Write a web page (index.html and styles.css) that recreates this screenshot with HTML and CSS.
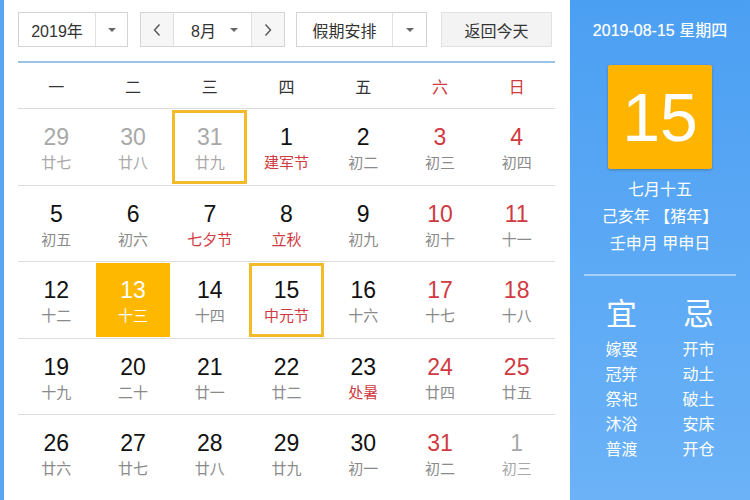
FILE: index.html
```html
<!DOCTYPE html>
<html lang="zh">
<head>
<meta charset="utf-8">
<link rel="stylesheet" href="styles.css">
</head>
<body>
<div class="app">
  <div class="edge"></div>
  <div class="cal">
    <div class="controls">
      <div class="sel sel-year">
        <span class="sel-text">2019年</span>
        <span class="sel-arrow"><i class="tri"></i></span>
      </div>
      <div class="sel sel-month">
        <span class="nav"><svg width="10" height="14" viewBox="0 0 10 14"><path d="M7.5 1.5 L2.5 7 L7.5 12.5" fill="none" stroke="#555" stroke-width="1.4"/></svg></span>
        <span class="month-mid"><span>8月</span><i class="tri"></i></span>
        <span class="nav"><svg width="10" height="14" viewBox="0 0 10 14"><path d="M2.5 1.5 L7.5 7 L2.5 12.5" fill="none" stroke="#555" stroke-width="1.4"/></svg></span>
      </div>
      <div class="sel sel-hol">
        <span class="sel-text">假期安排</span>
        <span class="sel-arrow"><i class="tri"></i></span>
      </div>
      <div class="btn-today">返回今天</div>
    </div>
    <div class="week">
      <span>一</span><span>二</span><span>三</span><span>四</span><span>五</span><span class="red">六</span><span class="red">日</span>
    </div>
    <div class="grid">
      <div class="cell other"><div class="in"><b>29</b><small>廿七</small></div></div>
      <div class="cell other"><div class="in"><b>30</b><small>廿八</small></div></div>
      <div class="cell other"><div class="in boxed"><b>31</b><small>廿九</small></div></div>
      <div class="cell"><div class="in"><b>1</b><small class="fest">建军节</small></div></div>
      <div class="cell"><div class="in"><b>2</b><small>初二</small></div></div>
      <div class="cell wk"><div class="in"><b>3</b><small>初三</small></div></div>
      <div class="cell wk"><div class="in"><b>4</b><small>初四</small></div></div>

      <div class="cell"><div class="in"><b>5</b><small>初五</small></div></div>
      <div class="cell"><div class="in"><b>6</b><small>初六</small></div></div>
      <div class="cell"><div class="in"><b>7</b><small class="fest">七夕节</small></div></div>
      <div class="cell"><div class="in"><b>8</b><small class="fest">立秋</small></div></div>
      <div class="cell"><div class="in"><b>9</b><small>初九</small></div></div>
      <div class="cell wk"><div class="in"><b>10</b><small>初十</small></div></div>
      <div class="cell wk"><div class="in"><b>11</b><small>十一</small></div></div>

      <div class="cell"><div class="in"><b>12</b><small>十二</small></div></div>
      <div class="cell"><div class="in filled"><b>13</b><small>十三</small></div></div>
      <div class="cell"><div class="in"><b>14</b><small>十四</small></div></div>
      <div class="cell"><div class="in boxed"><b>15</b><small class="fest">中元节</small></div></div>
      <div class="cell"><div class="in"><b>16</b><small>十六</small></div></div>
      <div class="cell wk"><div class="in"><b>17</b><small>十七</small></div></div>
      <div class="cell wk"><div class="in"><b>18</b><small>十八</small></div></div>

      <div class="cell"><div class="in"><b>19</b><small>十九</small></div></div>
      <div class="cell"><div class="in"><b>20</b><small>二十</small></div></div>
      <div class="cell"><div class="in"><b>21</b><small>廿一</small></div></div>
      <div class="cell"><div class="in"><b>22</b><small>廿二</small></div></div>
      <div class="cell"><div class="in"><b>23</b><small class="fest">处暑</small></div></div>
      <div class="cell wk"><div class="in"><b>24</b><small>廿四</small></div></div>
      <div class="cell wk"><div class="in"><b>25</b><small>廿五</small></div></div>

      <div class="cell"><div class="in"><b>26</b><small>廿六</small></div></div>
      <div class="cell"><div class="in"><b>27</b><small>廿七</small></div></div>
      <div class="cell"><div class="in"><b>28</b><small>廿八</small></div></div>
      <div class="cell"><div class="in"><b>29</b><small>廿九</small></div></div>
      <div class="cell"><div class="in"><b>30</b><small>初一</small></div></div>
      <div class="cell wk"><div class="in"><b>31</b><small>初二</small></div></div>
      <div class="cell other"><div class="in"><b>1</b><small>初三</small></div></div>
    </div>
  </div>
  <div class="panel">
    <div class="p-date">2019-08-15 星期四</div>
    <div class="p-day">15</div>
    <div class="p-lines">
      <div>七月十五</div>
      <div>己亥年 【猪年】</div>
      <div>壬申月 甲申日</div>
    </div>
    <div class="p-rule"></div>
    <div class="yiji">
      <div class="yj-col">
        <div class="yj-head">宜</div>
        <div>嫁娶</div><div>冠笄</div><div>祭祀</div><div>沐浴</div><div>普渡</div>
      </div>
      <div class="yj-col">
        <div class="yj-head">忌</div>
        <div>开市</div><div>动土</div><div>破土</div><div>安床</div><div>开仓</div>
      </div>
    </div>
  </div>
</div>
</body>
</html>
```
FILE: styles.css
```css
* { box-sizing: border-box; margin: 0; padding: 0; }
html, body { width: 750px; height: 500px; overflow: hidden; background: #fff; }
body {
  font-family: "Liberation Sans", "Noto Sans CJK SC", sans-serif;
  color: #222;
}
.app { display: flex; width: 750px; height: 500px; }
.edge { width: 4px; background: #5aa6f2; }
.cal { width: 566px; padding: 12px 15px 0 14px; background: #fff; }

.controls { display: flex; height: 35px; }
.sel {
  display: flex; height: 35px; border: 1px solid #d4d4d4; background: #fff;
  font-size: 16px; color: #333; align-items: stretch;
}
.sel-year { width: 110px; }
.sel-year .sel-text { width: 77px; }
.sel-text { display: flex; align-items: center; justify-content: center; border-right: 1px solid #e0e0e0; }
.sel-arrow { flex: 1; display: flex; align-items: center; justify-content: center; }
.tri {
  display: inline-block; width: 0; height: 0;
  border-left: 4px solid transparent; border-right: 4px solid transparent;
  border-top: 4px solid #666;
}
.sel-month { width: 145px; margin-left: 12px; }
.nav { width: 32px; display: flex; align-items: center; justify-content: center; background: #f6f6f6; }
.month-mid {
  flex: 1; display: flex; align-items: center; justify-content: space-between;
  padding: 0 13px 0 17px; border-left: 1px solid #e0e0e0; border-right: 1px solid #e0e0e0;
}
.sel-hol { width: 131px; margin-left: 11px; }
.sel-hol .sel-text { width: 96px; }
.btn-today {
  width: 111px; margin-left: 14px; height: 35px;
  display: flex; align-items: center; justify-content: center;
  background: #f3f3f3; border: 1px solid #e2e2e2; font-size: 16px; color: #333;
}

.week {
  margin-top: 14px; height: 47px; border-top: 2px solid #9fc3e8;
  display: grid; grid-template-columns: repeat(7, 1fr); align-items: center;
  font-size: 16px; color: #333; text-align: center;
}
.red { color: #d03a42; }

.grid { display: grid; grid-template-columns: repeat(7, 1fr); grid-auto-rows: 76.6px; }
.cell { border-top: 1px solid #dcdcdc; padding: 1px 1px 1px 1px; }
.in {
  height: 100%; display: flex; flex-direction: column; align-items: center;
  padding-top: 14px;
}
.in b { font-weight: normal; font-size: 23px; line-height: 26px; color: #111; }
.in small { font-size: 15px; line-height: 19px; margin-top: 3px; color: #8a8a8a; }
.wk b { color: #d03a42; }
.other b { color: #a8a8a8; }
.other small { color: #a8a8a8; }
.in small.fest { color: #d03a42; }
.boxed { border: 3px solid #f2bb2a; padding-top: 11px; }
.filled { background: #ffb800; }
.filled b, .filled small { color: #fff; }

.panel {
  width: 180px; display: flex; flex-direction: column; align-items: center;
  background: linear-gradient(#4b9ff2, #6bb2f7); color: #fff;
  padding-top: 20px;
}
.p-date { font-size: 16px; line-height: 22px; text-shadow: 0 0 1px rgba(255,255,255,0.5); }
.p-day {
  margin-top: 23px; width: 104px; height: 104px; border-radius: 2px;
  background: #ffb400; box-shadow: 0 1px 3px rgba(0,0,0,0.25);
  display: flex; align-items: center; justify-content: center;
  font-size: 68px; line-height: 1; color: #fff;
}
.p-lines { margin-top: 7px; font-size: 16px; line-height: 27px; text-align: center; }
.p-rule { margin-top: 17px; width: 152px; height: 2px; background: rgba(255,255,255,0.45); }
.yiji { margin-top: 19px; display: grid; grid-template-columns: 77px 77px; }
.yj-col { display: flex; flex-direction: column; align-items: center; font-size: 16px; line-height: 25px; }
.yj-head { font-size: 31px; line-height: 40px; margin-bottom: 2px; }
```
